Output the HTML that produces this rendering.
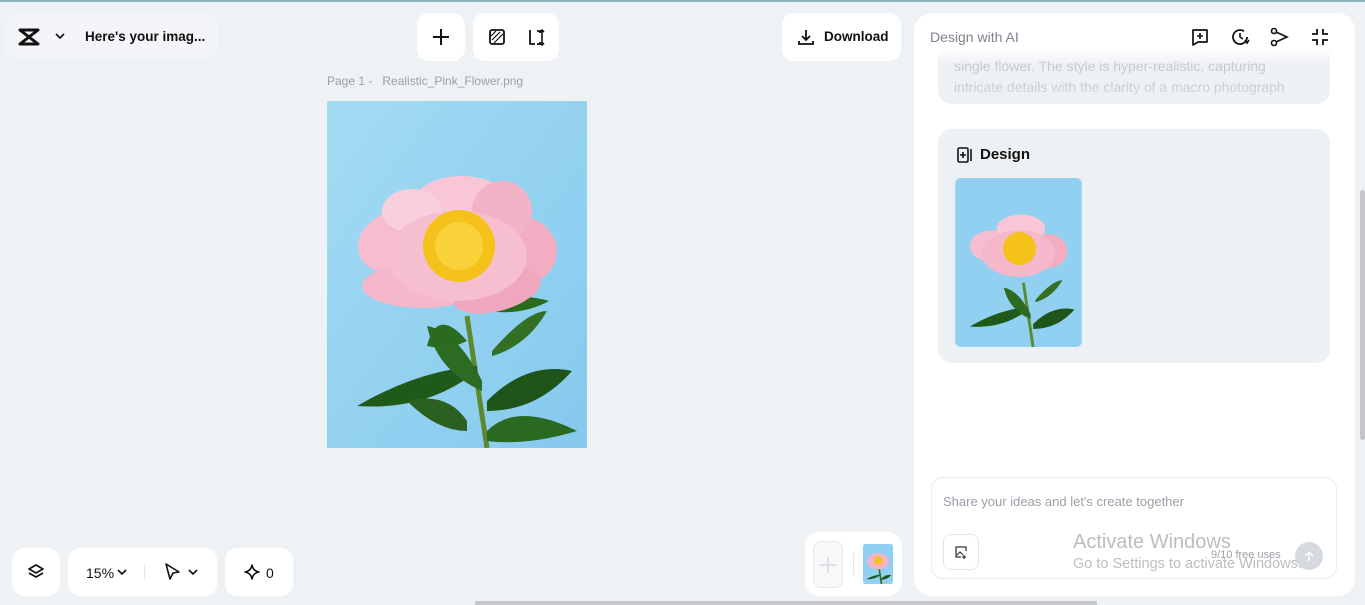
<!DOCTYPE html>
<html><head><meta charset="utf-8"><style>
*{box-sizing:border-box;margin:0;padding:0}
body{width:1365px;height:605px;overflow:hidden;background:#eff2f5;font-family:"Liberation Sans",sans-serif;position:relative;color:#111}
.box{position:absolute;background:#fff;border-radius:12px}
.ic{position:absolute}
</style></head><body>
<div style="position:absolute;left:0;top:0;width:1365px;height:2px;background:#8fb5bb"></div>
<div class="box" style="left:5px;top:14px;width:213px;height:44px;background:#f3f5f8"></div>
<svg class="ic" style="left:18px;top:27px" width="22" height="20" viewBox="0 0 22 20"><path d="M2 3h18l-9 7 9 7H2l9-7z" fill="none" stroke="#111" stroke-width="3" stroke-linejoin="round"/></svg>
<svg class="ic" style="left:54px;top:32px" width="12" height="8" viewBox="0 0 12 8"><path d="M2 2l4 4 4-4" fill="none" stroke="#111" stroke-width="1.6"/></svg>
<div style="position:absolute;left:85px;top:29px;font-size:13.5px;font-weight:bold">Here's your imag...</div>

<div class="box" style="left:417px;top:13px;width:48px;height:48px"></div>
<svg class="ic" style="left:431px;top:27px" width="20" height="20"><path d="M10 2v16M2 10h16" stroke="#111" stroke-width="2"/></svg>
<div class="box" style="left:473px;top:13px;width:86px;height:48px"></div>
<svg class="ic" style="left:488px;top:28px" width="18" height="18"><rect x="2" y="2" width="14" height="14" rx="2" fill="none" stroke="#111" stroke-width="1.8"/><path d="M4 12l8-8M6 15l9-9M3 8l5-5" stroke="#111" stroke-width="1.2"/></svg>
<svg class="ic" style="left:526px;top:27px" width="20" height="20"><path d="M5 4h-1v13h5M11 4h3v2M14 15v2h-3" fill="none" stroke="#111" stroke-width="1.8"/><path d="M16 3v15M14 5l2-2 2 2M14 16l2 2 2-2" fill="none" stroke="#111" stroke-width="1.6"/></svg>

<div style="position:absolute;left:327px;top:74px;font-size:12px;color:#9aa0a8">Page 1 -&nbsp;&nbsp; Realistic_Pink_Flower.png</div>

<svg style="position:absolute;left:327px;top:101px" width="260" height="347" viewBox="0 0 260 347">
<defs><linearGradient id="bg" x1="0" y1="0" x2="1" y2="1"><stop offset="0" stop-color="#a3dbf3"/><stop offset="1" stop-color="#86c9ee"/></linearGradient></defs>
<rect width="260" height="347" fill="url(#bg)"/>
<path d="M140 215 Q150 280 160 347" stroke="#5b8a2e" stroke-width="5" fill="none"/>
<path d="M150 265 Q90 270 30 305 Q100 310 150 270z" fill="#1f5a1a"/>
<path d="M155 280 Q130 230 100 225 Q110 270 155 290z" fill="#2e6b22"/>
<path d="M160 300 Q200 260 245 270 Q210 310 160 310z" fill="#1e5518"/>
<path d="M160 330 Q190 300 250 330 Q200 345 160 340z" fill="#2a6a20"/>
<path d="M140 240 Q110 205 100 245 Q120 250 140 240z" fill="#2b6b1f"/>
<path d="M165 250 Q200 210 220 210 Q200 245 165 255z" fill="#336f25"/>
<path d="M140 320 Q120 290 80 300 Q110 330 140 330z" fill="#2a6020"/>
<path d="M160 205 Q190 190 222 200 Q195 215 160 210z" fill="#2b6b1f"/>
<ellipse cx="75" cy="140" rx="45" ry="32" fill="#f6bdd0" transform="rotate(-15 75 140)"/>
<ellipse cx="190" cy="150" rx="40" ry="35" fill="#f3adc3"/>
<ellipse cx="95" cy="185" rx="60" ry="22" fill="#f5b7ca"/>
<ellipse cx="170" cy="190" rx="45" ry="20" fill="#f0a6bd" transform="rotate(-15 170 190)"/>
<ellipse cx="135" cy="105" rx="50" ry="30" fill="#f8c6d6"/>
<ellipse cx="175" cy="110" rx="30" ry="30" fill="#f4b2c6"/>
<ellipse cx="85" cy="110" rx="30" ry="22" fill="#f9cfdc"/>
<ellipse cx="130" cy="155" rx="70" ry="45" fill="#f6bfd0"/>
<circle cx="132" cy="145" r="36" fill="#f5c21b"/>
<circle cx="132" cy="145" r="24" fill="#f9d23a"/>
</svg>

<div class="box" style="left:782px;top:13px;width:119px;height:48px"></div>
<svg class="ic" style="left:796px;top:27px" width="20" height="20"><path d="M10 3v10M6 9l4 4 4-4M3 14v3h14v-3" fill="none" stroke="#111" stroke-width="1.8"/></svg>
<div style="position:absolute;left:824px;top:29px;font-size:13.5px;font-weight:bold">Download</div>

<div class="box" style="left:914px;top:13px;width:441px;height:583px;border-radius:18px"></div>
<div style="position:absolute;left:930px;top:29px;font-size:14px;color:#7d848d">Design with AI</div>
<svg class="ic" style="left:1190px;top:27px" width="20" height="20"><path d="M3 3h14v12h-9l-5 3z" fill="none" stroke="#111" stroke-width="1.7" stroke-linejoin="round"/><path d="M10 6v6M7 9h6" stroke="#111" stroke-width="1.6"/></svg>
<svg class="ic" style="left:1230px;top:27px" width="20" height="20"><path d="M17 10a7 7 0 1 1-3-5.7" fill="none" stroke="#111" stroke-width="1.8"/><path d="M10 6v4l3 2M15 13l2 3 2-3" fill="none" stroke="#111" stroke-width="1.6"/></svg>
<svg class="ic" style="left:1270px;top:27px" width="20" height="20"><circle cx="4" cy="4" r="2.5" fill="none" stroke="#111" stroke-width="1.6"/><circle cx="4" cy="16" r="2.5" fill="none" stroke="#111" stroke-width="1.6"/><path d="M6 5l11 5-11 5" fill="none" stroke="#111" stroke-width="1.6"/></svg>
<svg class="ic" style="left:1310px;top:27px" width="20" height="20"><path d="M7 2v5H2M13 2v5h5M7 18v-5H2M13 18v-5h5" fill="none" stroke="#111" stroke-width="1.8"/></svg>

<div style="position:absolute;left:938px;top:50px;width:392px;height:54px;background:#eef1f4;border-radius:0 0 14px 14px;overflow:hidden">
<div style="position:absolute;left:16px;top:6px;font-size:14px;line-height:21px;color:#c6cacf;white-space:nowrap">single flower. The style is hyper-realistic, capturing<br>intricate details with the clarity of a macro photograph</div>
<div style="position:absolute;left:0;top:0;width:100%;height:14px;background:linear-gradient(#fff,rgba(255,255,255,0))"></div>
<div style="position:absolute;left:0;bottom:0;width:100%;height:20px;background:linear-gradient(rgba(238,241,244,0),rgba(238,241,244,0.7))"></div>
</div>

<div style="position:absolute;left:938px;top:129px;width:392px;height:234px;background:#eef1f4;border-radius:14px"></div>
<svg class="ic" style="left:956px;top:146px" width="18" height="18"><rect x="2" y="2" width="10" height="14" rx="1.5" fill="none" stroke="#111" stroke-width="1.6"/><path d="M7 6v6M4 9h6M15 3v12" stroke="#111" stroke-width="1.6"/></svg>
<div style="position:absolute;left:980px;top:146px;font-size:15px;font-weight:bold">Design</div>
<svg style="position:absolute;left:955px;top:178px;border-radius:6px" width="127" height="169" viewBox="0 0 260 347">
<rect width="260" height="347" fill="#92d0f1"/>
<path d="M140 215 Q150 280 160 347" stroke="#5b8a2e" stroke-width="6" fill="none"/>
<path d="M150 265 Q90 270 30 305 Q100 310 150 270z" fill="#1f5a1a"/>
<path d="M160 300 Q200 260 245 270 Q210 310 160 310z" fill="#1e5518"/>
<path d="M165 250 Q200 210 220 210 Q200 245 165 255z" fill="#336f25"/>
<path d="M155 280 Q130 230 100 225 Q110 270 155 290z" fill="#2e6b22"/>
<ellipse cx="75" cy="140" rx="45" ry="32" fill="#f6bdd0"/>
<ellipse cx="190" cy="150" rx="40" ry="35" fill="#f3adc3"/>
<ellipse cx="135" cy="105" rx="50" ry="30" fill="#f8c6d6"/>
<ellipse cx="130" cy="155" rx="75" ry="48" fill="#f5b8cb"/>
<circle cx="132" cy="145" r="34" fill="#f5c21b"/>
</svg>

<div style="position:absolute;left:931px;top:477px;width:406px;height:102px;background:#fff;border:1px solid #e8ebef;border-radius:12px"></div>
<div style="position:absolute;left:943px;top:494px;font-size:13px;color:#9aa0a8">Share your ideas and let's create together</div>
<div style="position:absolute;left:943px;top:534px;width:36px;height:36px;border:1px solid #e2e5ea;border-radius:8px"></div>
<svg class="ic" style="left:954px;top:545px" width="14" height="14"><path d="M12 6V2H2v10h5" fill="none" stroke="#333" stroke-width="1.3"/><path d="M3 10l3-3 3 3M10 10v4M8 12h4" fill="none" stroke="#333" stroke-width="1.2"/></svg>
<div style="position:absolute;left:1211px;top:549px;font-size:11px;color:#9aa0a8">9/10 free uses</div>
<div style="position:absolute;left:1295px;top:542px;width:28px;height:28px;border-radius:50%;background:#d6dade"></div>
<svg class="ic" style="left:1302px;top:549px" width="14" height="14"><path d="M7 12V3M3 7l4-4 4 4" fill="none" stroke="#fff" stroke-width="1.5"/></svg>
<div style="position:absolute;left:1073px;top:531px;font-size:20px;color:#bdbdbd">Activate Windows</div>
<div style="position:absolute;left:1073px;top:556px;font-size:14.5px;color:#bdbdbd">Go to Settings to activate Windows.</div>

<div style="position:absolute;left:1360px;top:190px;width:5px;height:250px;background:#c4c6c9;border-radius:3px"></div>
<div style="position:absolute;left:475px;top:601px;width:622px;height:4px;background:#c4c6c9"></div>

<div class="box" style="left:805px;top:532px;width:97px;height:64px;border-radius:14px"></div>
<div style="position:absolute;left:813px;top:541px;width:30px;height:47px;border:1px solid #e6e9ee;border-radius:8px;background:#f7f8fa"></div>
<svg class="ic" style="left:818px;top:555px" width="20" height="20"><path d="M10 2v16M2 10h16" stroke="#d5d8dd" stroke-width="1.5"/></svg>
<div style="position:absolute;left:853px;top:553px;width:1px;height:22px;background:#e2e5ea"></div>
<svg style="position:absolute;left:863px;top:542px;border-radius:5px" width="30" height="44" viewBox="0 0 260 347"><rect width="260" height="347" fill="#92d0f1"/><path d="M140 215 L160 347" stroke="#2e6b22" stroke-width="14"/><path d="M150 265 Q90 270 30 305 Q100 310 150 270z" fill="#1f5a1a"/><path d="M160 300 Q200 260 245 270 Q210 310 160 310z" fill="#1e5518"/><ellipse cx="130" cy="150" rx="95" ry="70" fill="#f4b4c8"/><circle cx="132" cy="145" r="36" fill="#f5c21b"/></svg>

<div class="box" style="left:12px;top:548px;width:48px;height:48px"></div>
<svg class="ic" style="left:26px;top:562px" width="20" height="20"><path d="M10 3l7 4-7 4-7-4z" fill="none" stroke="#111" stroke-width="1.7" stroke-linejoin="round"/><path d="M3 11l7 4 7-4" fill="none" stroke="#111" stroke-width="1.7" stroke-linejoin="round"/></svg>
<div class="box" style="left:68px;top:548px;width:149px;height:48px"></div>
<div style="position:absolute;left:86px;top:565px;font-size:14px">15%</div>
<svg class="ic" style="left:116px;top:567px" width="12" height="10"><path d="M2 3l4 4 4-4" fill="none" stroke="#111" stroke-width="1.6"/></svg>
<div style="position:absolute;left:144px;top:564px;width:1px;height:16px;background:#e2e5ea"></div>
<svg class="ic" style="left:163px;top:562px" width="18" height="20"><path d="M3 2l13 8-6 1-3 6z" fill="none" stroke="#111" stroke-width="1.6" stroke-linejoin="round"/></svg>
<svg class="ic" style="left:187px;top:567px" width="12" height="10"><path d="M2 3l4 4 4-4" fill="none" stroke="#111" stroke-width="1.6"/></svg>
<div class="box" style="left:225px;top:548px;width:68px;height:48px"></div>
<svg class="ic" style="left:244px;top:564px" width="16" height="16"><path d="M8 1Q9 7 15 8Q9 9 8 15Q7 9 1 8Q7 7 8 1z" fill="none" stroke="#111" stroke-width="1.6" stroke-linejoin="round"/></svg>
<div style="position:absolute;left:266px;top:565px;font-size:14px">0</div>
</body></html>
